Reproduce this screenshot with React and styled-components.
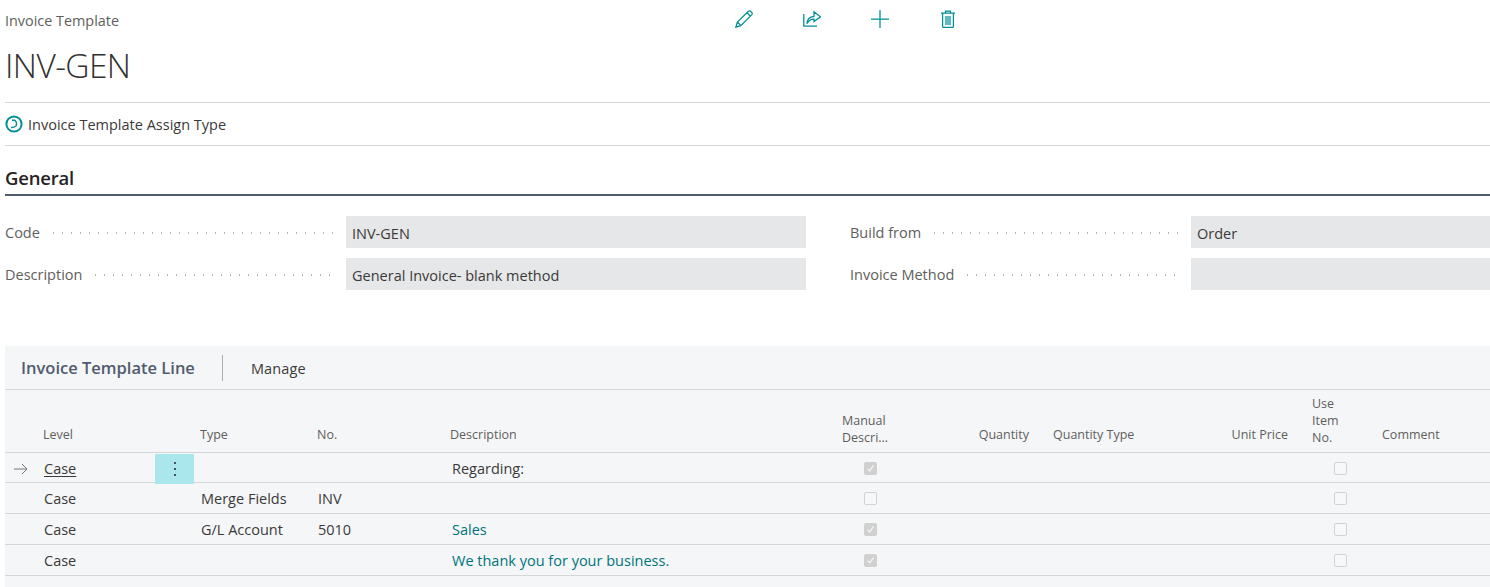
import React from 'react';
import styled, { createGlobalStyle } from 'styled-components';

const GlobalStyle = createGlobalStyle`
    html, body {
        margin: 0;
        padding: 0;
        background: #fff;
        font-family: "Open Sans", "Noto Sans", sans-serif;
        color: #323130;
    }
`;

const TEAL = '#008f94';

const Page = styled.div`
    width: 1490px;
    height: 587px;
    overflow: hidden;
    padding-left: 5px;
    box-sizing: border-box;
`;

const Header = styled.div`
    position: relative;
    height: 103px;
    border-bottom: 1px solid #d5d6da;
    box-sizing: border-box;
`;

const Caption = styled.div`
    padding-top: 12px;
    font-size: 14.4px;
    line-height: 18px;
    color: #605e5c;
`;

const BigTitle = styled.div`
    margin-top: 12px;
    font-size: 33.5px;
    line-height: 46px;
    font-weight: 300;
    color: #323130;
    letter-spacing: -0.6px;
`;

const Actions = styled.div`
    position: absolute;
    top: 10px;
    left: 730px;
    display: flex;
    gap: 50px;
`;

const ActionIcon = styled.svg`
    width: 18px;
    height: 18px;
    fill: none;
    stroke: ${TEAL};
    stroke-width: 1.25;
`;

const ActionBar = styled.div`
    height: 42px;
    display: flex;
    align-items: center;
    gap: 5px;
    border-bottom: 1px solid #d5d6da;
    font-size: 14.5px;
    color: #3b3a39;
`;

const Section = styled.div`
    height: 50px;
    border-bottom: 2px solid #505c6d;
    box-sizing: border-box;
    display: flex;
    align-items: flex-end;
    padding-bottom: 2px;
    font-size: 18.5px;
    font-weight: 600;
    line-height: 28px;
    color: #252423;
    letter-spacing: -0.2px;
`;

const Form = styled.div`
    display: grid;
    grid-template-columns: 801px 1fr;
    column-gap: 44px;
    row-gap: 10px;
    padding-top: 20px;
    height: 150px;
    box-sizing: border-box;
    align-content: start;
`;

const Field = styled.div`
    display: grid;
    grid-template-columns: 341px 1fr;
    height: 32px;
    align-items: center;
`;

const Label = styled.div`
    display: flex;
    align-items: center;
    gap: 9px;
    padding-right: 13px;
    padding-top: 1px;
    font-size: 14.5px;
    color: #605e5c;
    white-space: nowrap;
`;

const Dots = styled.span`
    flex: 1;
    height: 2px;
    background-image: radial-gradient(circle, #b4b4b6 0.8px, transparent 1px);
    background-size: 9px 2px;
    background-repeat: repeat-x;
`;

const Value = styled.div`
    height: 32px;
    background: #e6e7e8;
    padding-left: 6px;
    font-size: 14.5px;
    line-height: 35px;
    color: #3b3a39;
`;

const Panel = styled.div`
    background: #f5f6f8;
    height: 241px;
`;

const PanelBar = styled.div`
    height: 44px;
    display: flex;
    align-items: center;
    border-bottom: 1px solid #d5d6da;
    box-sizing: border-box;
    padding: 1px 0 0 16px;
`;

const PanelTitle = styled.div`
    font-size: 16.5px;
    font-weight: 600;
    color: #505c6d;
    padding-right: 27px;
    border-right: 1px solid #a9adb3;
    height: 26px;
    line-height: 26px;
    margin-right: 28px;
`;

const PanelMenu = styled.div`
    font-size: 14.5px;
    letter-spacing: 0.15px;
    color: #3b3a39;
`;

const Row = styled.div`
    display: grid;
    grid-template-columns: 33px 117px 39px 117px 133px 392px 69px 130px 145px 114px 82px 1fr;
    height: ${p => p.$height}px;
    border-bottom: 1px solid #d5d6da;
    box-sizing: border-box;
    align-items: ${p => (p.$head ? 'end' : 'center')};
`;

const HeadCell = styled.div`
    font-size: 12.5px;
    line-height: 17px;
    color: #605e5c;
    padding: 0 ${p => p.$padRight ?? 6}px ${p => (p.$multi ? 6 : 9)}px ${p => p.$pad ?? 6}px;
    text-align: ${p => (p.$right ? 'right' : 'left')};
`;

const Cell = styled.div`
    font-size: 14.5px;
    line-height: 30px;
    height: 30px;
    padding-left: ${p => p.$pad ?? 7}px;
    padding-top: ${p => (p.$first ? 0 : 1)}px;
    white-space: nowrap;
    color: ${p => (p.$teal ? '#00747a' : '#3b3a39')};
    text-decoration: ${p => (p.$link ? 'underline' : 'none')};
    text-underline-offset: 2px;
`;

const MenuCell = styled.div`
    height: 30px;
    background: #a9e7ec;
    display: flex;
    align-items: center;
    justify-content: center;
`;

const ArrowCell = styled.div`
    height: 30px;
    display: flex;
    align-items: center;
    padding-left: 8px;
`;

const CheckCell = styled.div`
    display: flex;
    justify-content: center;
    height: 30px;
    align-items: center;
    padding-left: ${p => p.$pad ?? 0}px;
    margin-bottom: ${p => (p.$first ? 2 : 0)}px;
`;

const Check = styled.div`
    width: 13px;
    height: 13px;
    box-sizing: border-box;
    border-radius: 2px;
    border: 1px solid ${p => (p.$on ? '#d0d0d0' : '#d2d3d4')};
    background: ${p => (p.$on ? '#d0d0d0' : '#f7f8f9')};
    display: flex;
    align-items: center;
    justify-content: center;
`;

const fields = [
    ['Code', 'INV-GEN'],
    ['Build from', 'Order'],
    ['Description', 'General Invoice- blank method'],
    ['Invoice Method', ''],
];

const lines = [
    { level: 'Case', type: '', no: '', desc: 'Regarding:', manual: true, active: true },
    { level: 'Case', type: 'Merge Fields', no: 'INV', desc: '', manual: false },
    { level: 'Case', type: 'G/L Account', no: '5010', desc: 'Sales', manual: true, teal: true },
    { level: 'Case', type: '', no: '', desc: 'We thank you for your business.', manual: true, teal: true },
];

const CheckBox = ({ on }) => (
    <Check $on={on}>
        {on && (
            <svg width="9" height="9" viewBox="0 0 9 9" fill="none" stroke="#f2f2f2" strokeWidth="1.4">
                <path d="M1.5 4.8 L3.6 7 L7.5 1.5" />
            </svg>
        )}
    </Check>
);

const App = () => (
    <Page>
        <GlobalStyle />
        <Header>
            <Caption>Invoice Template</Caption>
            <BigTitle>INV-GEN</BigTitle>
            <Actions>
                <ActionIcon viewBox="0 0 18 18">
                    <path d="M0.8 17.2 L2.4 12 L13.4 1.2 Q14.5 0.4 15.6 1.2 L16.8 2.4 Q17.6 3.5 16.8 4.6 L5.8 15.6 Z M2.4 12 L5.8 15.6 M12 2.8 L15.2 6" />
                </ActionIcon>
                <ActionIcon viewBox="0 0 18 18">
                    <path d="M0.8 4 V16 H14 M3.8 13.6 Q4.4 7.2 11 6.4 V1.8 L17.4 6.8 L11 11.6 V9 Q6.4 9 3.8 13.6 Z" />
                </ActionIcon>
                <ActionIcon viewBox="0 0 18 18">
                    <path d="M0 9 H18 M9 0 V18" />
                </ActionIcon>
                <ActionIcon viewBox="0 0 18 18">
                    <path d="M2 3 H16 M6.5 3 V1 H11.5 V3 M3.6 3 V16.4 Q3.6 17.4 4.6 17.4 H13.4 Q14.4 17.4 14.4 16.4 V3 M7 6 V15 M9 6 V15 M11 6 V15" />
                </ActionIcon>
            </Actions>
        </Header>
        <ActionBar>
            <svg width="18" height="18" viewBox="0 0 18 18" fill="none" stroke={TEAL}>
                <circle cx="9" cy="9" r="7.6" strokeWidth="2" />
                <path d="M7 5.2 H9.8 Q12.4 7.4 11.2 10.6 Q9.6 12.8 6 12.4" strokeWidth="1.4" />
            </svg>
            Invoice Template Assign Type
        </ActionBar>
        <Section>General</Section>
        <Form>
            {fields.map(([label, value]) => (
                <Field key={label}>
                    <Label>{label}<Dots /></Label>
                    <Value>{value}</Value>
                </Field>
            ))}
        </Form>
        <Panel>
            <PanelBar>
                <PanelTitle>Invoice Template Line</PanelTitle>
                <PanelMenu>Manage</PanelMenu>
            </PanelBar>
            <Row $head $height={63}>
                <span />
                <HeadCell $pad={5}>Level</HeadCell>
                <span />
                <HeadCell>Type</HeadCell>
                <HeadCell>No.</HeadCell>
                <HeadCell>Description</HeadCell>
                <HeadCell $multi>Manual Descri...</HeadCell>
                <HeadCell $right>Quantity</HeadCell>
                <HeadCell $pad={18}>Quantity Type</HeadCell>
                <HeadCell $right>Unit Price</HeadCell>
                <HeadCell $multi $pad={18} $padRight={30}>Use Item No.</HeadCell>
                <HeadCell>Comment</HeadCell>
            </Row>
            {lines.map((line, i) => (
                <Row key={i} $height={line.active ? 30 : 31}>
                    {line.active ? (
                        <ArrowCell>
                            <svg width="15" height="12" viewBox="0 0 15 12" fill="none" stroke="#7a7674" strokeWidth="1">
                                <path d="M1 6 H14 M9 1 L14 6 L9 11" />
                            </svg>
                        </ArrowCell>
                    ) : <span />}
                    <Cell $first={line.active} $pad={6} $link={line.active}>{line.level}</Cell>
                    {line.active ? (
                        <MenuCell>
                            <svg width="4" height="18" viewBox="0 0 4 18" fill="#252423">
                                <circle cx="2" cy="3" r="1" />
                                <circle cx="2" cy="9" r="1" />
                                <circle cx="2" cy="15" r="1" />
                            </svg>
                        </MenuCell>
                    ) : <span />}
                    <Cell $first={line.active}>{line.type}</Cell>
                    <Cell $first={line.active}>{line.no}</Cell>
                    <Cell $first={line.active} $pad={8} $teal={line.teal}>{line.desc}</Cell>
                    <CheckCell $first={line.active}><CheckBox on={line.manual} /></CheckCell>
                    <span />
                    <span />
                    <span />
                    <CheckCell $first={line.active} $pad={10}><CheckBox /></CheckCell>
                    <span />
                </Row>
            ))}
        </Panel>
    </Page>
);

export default App;
